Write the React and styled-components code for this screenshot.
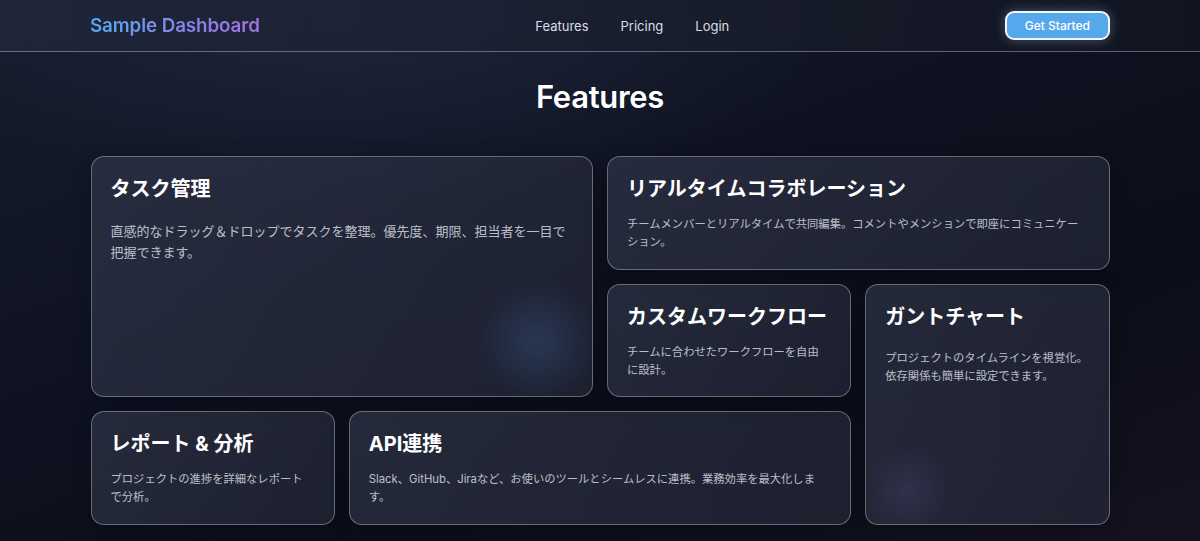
import React from "react";
import styled, { createGlobalStyle } from "styled-components";

const GlobalStyle = createGlobalStyle`
  * { box-sizing: border-box; }
  html, body { margin: 0; padding: 0; }
  body {
    font-family: "Inter", "Noto Sans CJK JP", sans-serif;
    background: #0d101b;
    color: #fff;
  }
`;

const Page = styled.div`
  min-height: 541px;
  background:
    radial-gradient(ellipse 700px 300px at 30% 0%, rgba(40, 50, 78, 0.55), transparent 70%),
    linear-gradient(160deg, #161b2b 0%, #0e1220 45%, #0b0e19 70%, #14121f 100%);
  overflow: hidden;
`;

const Header = styled.header`
  height: 52px;
  border-bottom: 1px solid rgba(255, 255, 255, 0.32);
  background: linear-gradient(90deg, rgba(32, 38, 58, 0.9) 0%, rgba(26, 31, 47, 0.8) 50%, rgba(18, 21, 32, 0.85) 100%);
`;

const HeaderInner = styled.div`
  width: 1020px;
  height: 100%;
  margin: 0 auto;
  display: flex;
  align-items: center;
  justify-content: space-between;
`;

const Logo = styled.div`
  font-size: 18.8px;
  font-weight: 600;
  letter-spacing: -0.1px;
  background: linear-gradient(90deg, #5aa8ef 0%, #8f7be6 70%, #a072e0 100%);
  -webkit-background-clip: text;
  background-clip: text;
  color: transparent;
`;

const Nav = styled.nav`
  display: flex;
  gap: 32px;
`;

const NavLink = styled.a`
  font-size: 13px;
  color: #dadde4;
  text-decoration: none;
`;

const CTA = styled.button`
  height: 29px;
  padding: 0 18px;
  border: 2px solid #f2f6fb;
  border-radius: 9px;
  background: #56a8ec;
  color: #fff;
  font-family: inherit;
  font-size: 12px;
  font-weight: 500;
  box-shadow: 0 0 12px rgba(170, 200, 255, 0.35);
`;

const Main = styled.main`
  width: 1019px;
  margin: 0 auto;
  padding-top: 26px;
`;

const Heading = styled.h1`
  margin: 0 0 40px;
  text-align: center;
  font-size: 31px;
  line-height: 38px;
  font-weight: 600;
  letter-spacing: -0.3px;
`;

const Grid = styled.div`
  display: grid;
  grid-template-columns: repeat(4, 1fr);
  grid-auto-rows: 113.5px;
  column-gap: 14px;
  row-gap: 14px;
`;

const Card = styled.div`
  grid-column: ${(p) => p.$col};
  grid-row: ${(p) => p.$row};
  padding: 20px 19px;
  border: 1px solid rgba(255, 255, 255, 0.32);
  border-radius: 13px;
  background:
    ${(p) => p.$glow || "linear-gradient(transparent, transparent)"},
    linear-gradient(120deg, rgba(52, 58, 78, 0.62) 0%, rgba(40, 44, 62, 0.6) 100%);
  box-shadow: 0 4px 18px rgba(0, 0, 0, 0.25);
`;

const Title = styled.h2`
  margin: 0 0 ${(p) => (p.$tall ? "20px" : "14px")};
  font-size: 20px;
  line-height: 24px;
  font-weight: 700;
  color: #ffffff;
`;

const Desc = styled.p`
  margin: 0;
  font-size: ${(p) => (p.$big ? "13px" : "11.3px")};
  line-height: 1.6;
  white-space: pre-line;
  color: rgba(228, 231, 238, 0.8);
`;

const features = [
  {
    title: "タスク管理",
    desc: "直感的なドラッグ＆ドロップでタスクを整理。優先度、期限、担当者を一目で\n把握できます。",
    col: "1 / span 2",
    row: "1 / span 2",
    tall: true,
    big: true,
    glow: "radial-gradient(circle 60px at 89% 77%, rgba(70, 110, 170, 0.28), transparent 100%)",
  },
  {
    title: "リアルタイムコラボレーション",
    desc: "チームメンバーとリアルタイムで共同編集。コメントやメンションで即座にコミュニケー\nション。",
    col: "3 / span 2",
    row: "1",
  },
  {
    title: "カスタムワークフロー",
    desc: "チームに合わせたワークフローを自由\nに設計。",
    col: "3",
    row: "2",
  },
  {
    title: "ガントチャート",
    desc: "プロジェクトのタイムラインを視覚化。\n依存関係も簡単に設定できます。",
    col: "4",
    row: "2 / span 2",
    tall: true,
    glow: "radial-gradient(circle 45px at 17% 86%, rgba(110, 80, 150, 0.22), transparent 100%)",
  },
  {
    title: "レポート & 分析",
    desc: "プロジェクトの進捗を詳細なレポート\nで分析。",
    col: "1",
    row: "3",
  },
  {
    title: "API連携",
    desc: "Slack、GitHub、Jiraなど、お使いのツールとシームレスに連携。業務効率を最大化しま\nす。",
    col: "2 / span 2",
    row: "3",
  },
];

export default function App() {
  return (
    <>
      <GlobalStyle />
      <Page>
        <Header>
          <HeaderInner>
            <Logo>Sample Dashboard</Logo>
            <Nav>
              <NavLink href="#">Features</NavLink>
              <NavLink href="#">Pricing</NavLink>
              <NavLink href="#">Login</NavLink>
            </Nav>
            <CTA>Get Started</CTA>
          </HeaderInner>
        </Header>
        <Main>
          <Heading>Features</Heading>
          <Grid>
            {features.map((f) => (
              <Card key={f.title} $col={f.col} $row={f.row} $glow={f.glow}>
                <Title $tall={f.tall}>{f.title}</Title>
                <Desc $big={f.big}>{f.desc}</Desc>
              </Card>
            ))}
          </Grid>
        </Main>
      </Page>
    </>
  );
}
